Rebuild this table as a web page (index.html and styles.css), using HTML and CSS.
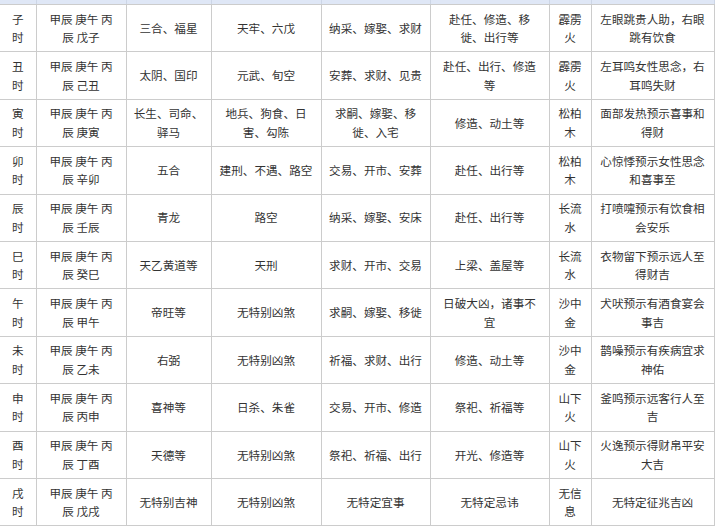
FILE: index.html
```html
<!DOCTYPE html>
<html lang="zh-CN">
<head>
<meta charset="utf-8">
<title>时辰吉凶</title>
<link rel="stylesheet" href="styles.css">
</head>
<body>
<table class="hours">
  <colgroup>
    <col class="c-hour"><col class="c-gz"><col class="c-ji"><col class="c-xiong"><col class="c-yi"><col class="c-avoid"><col class="c-wx"><col class="c-omen">
  </colgroup>
  <thead>
    <tr class="head-strip"><th></th><th></th><th></th><th></th><th></th><th></th><th></th><th></th></tr>
  </thead>
  <tbody>
    <tr><td>子时</td><td>甲辰 庚午 丙辰 戊子</td><td>三合、福星</td><td>天牢、六戊</td><td>纳采、嫁娶、求财</td><td>赴任、修造、移徙、出行等</td><td>霹雳火</td><td>左眼跳贵人助，右眼跳有饮食</td></tr>
    <tr><td>丑时</td><td>甲辰 庚午 丙辰 己丑</td><td>太阴、国印</td><td>元武、旬空</td><td>安葬、求财、见贵</td><td>赴任、出行、修造等</td><td>霹雳火</td><td>左耳鸣女性思念，右耳鸣失财</td></tr>
    <tr><td>寅时</td><td>甲辰 庚午 丙辰 庚寅</td><td>长生、司命、驿马</td><td>地兵、狗食、日害、勾陈</td><td>求嗣、嫁娶、移徙、入宅</td><td>修造、动土等</td><td>松柏木</td><td>面部发热预示喜事和得财</td></tr>
    <tr><td>卯时</td><td>甲辰 庚午 丙辰 辛卯</td><td>五合</td><td>建刑、不遇、路空</td><td>交易、开市、安葬</td><td>赴任、出行等</td><td>松柏木</td><td>心惊悸预示女性思念和喜事至</td></tr>
    <tr><td>辰时</td><td>甲辰 庚午 丙辰 壬辰</td><td>青龙</td><td>路空</td><td>纳采、嫁娶、安床</td><td>赴任、出行等</td><td>长流水</td><td>打喷嚏预示有饮食相会安乐</td></tr>
    <tr><td>巳时</td><td>甲辰 庚午 丙辰 癸巳</td><td>天乙黄道等</td><td>天刑</td><td>求财、开市、交易</td><td>上梁、盖屋等</td><td>长流水</td><td>衣物留下预示远人至得财吉</td></tr>
    <tr><td>午时</td><td>甲辰 庚午 丙辰 甲午</td><td>帝旺等</td><td>无特别凶煞</td><td>求嗣、嫁娶、移徙</td><td>日破大凶，诸事不宜</td><td>沙中金</td><td>犬吠预示有酒食宴会事吉</td></tr>
    <tr><td>未时</td><td>甲辰 庚午 丙辰 乙未</td><td>右弼</td><td>无特别凶煞</td><td>祈福、求财、出行</td><td>修造、动土等</td><td>沙中金</td><td>鹊噪预示有疾病宜求神佑</td></tr>
    <tr><td>申时</td><td>甲辰 庚午 丙辰 丙申</td><td>喜神等</td><td>日杀、朱雀</td><td>交易、开市、修造</td><td>祭祀、祈福等</td><td>山下火</td><td>釜鸣预示远客行人至吉</td></tr>
    <tr><td>酉时</td><td>甲辰 庚午 丙辰 丁酉</td><td>天德等</td><td>无特别凶煞</td><td>祭祀、祈福、出行</td><td>开光、修造等</td><td>山下火</td><td>火逸预示得财帛平安大吉</td></tr>
    <tr><td>戌时</td><td>甲辰 庚午 丙辰 戊戌</td><td>无特别吉神</td><td>无特别凶煞</td><td>无特定宜事</td><td>无特定忌讳</td><td>无信息</td><td>无特定征兆吉凶</td></tr>
  </tbody>
</table>
</body>
</html>
```

FILE: styles.css
```css
html, body {
  margin: 0;
  padding: 0;
  background: #ffffff;
}

body {
  overflow: hidden;
}

.hours {
  border-collapse: collapse;
  table-layout: fixed;
  width: 714px;
  font-family: "Noto Sans CJK SC", "Noto Sans", sans-serif;
  font-size: 11.6px;
  line-height: 18.7px;
  color: #333333;
}

.c-hour { width: 36px; }
.c-gz { width: 90px; }
.c-ji { width: 85px; }
.c-xiong { width: 110px; }
.c-yi { width: 109px; }
.c-avoid { width: 119px; }
.c-wx { width: 42px; }
.c-omen { width: 123px; }

.hours th,
.hours td {
  border: 1px solid #cccccc;
  text-align: center;
  vertical-align: middle;
}

.head-strip th {
  height: 4px;
  padding: 0;
  line-height: 0;
  font-size: 0;
  background: #dfe7f6;
  border-top: none;
  border-left-color: #cdd6e6;
  border-right-color: #cdd6e6;
  border-bottom-color: #cccccc;
}

.hours td {
  padding: 4.5px 7px;
}

.hours td:nth-child(2) {
  padding-left: 9px;
  padding-right: 9px;
}

.hours td:nth-child(8) {
  padding-left: 4px;
  padding-right: 4px;
}

.hours tr > :first-child {
  border-left: none;
}
```
